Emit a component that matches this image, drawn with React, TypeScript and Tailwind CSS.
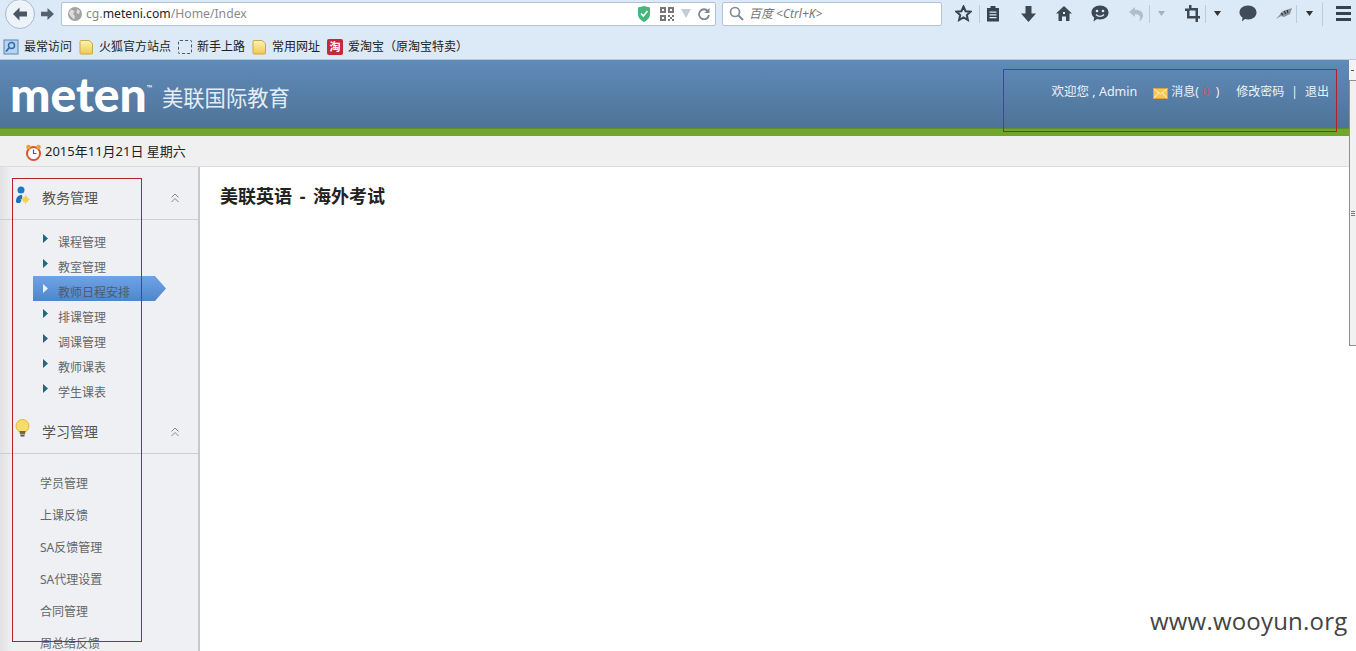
import React from "react";

const cjk = '"Noto Sans","Noto Sans CJK SC",sans-serif';

function Tri({ className = "" }: { className?: string }) {
  return (
    <svg width="7" height="5" viewBox="0 0 7 5" className={className}>
      <path d="M0 0h7L3.5 5z" fill="#333" />
    </svg>
  );
}

function Folder() {
  return (
    <svg width="15" height="16" viewBox="0 0 15 16">
      <defs>
        <linearGradient id="fg" x1="0" y1="0" x2="0" y2="1">
          <stop offset="0" stopColor="#fdf3b8" />
          <stop offset="1" stopColor="#eec94f" />
        </linearGradient>
      </defs>
      <path d="M2 1.5h8l3.5 3v9.5a1 1 0 0 1-1 1H2a1 1 0 0 1-1-1V2.5a1 1 0 0 1 1-1z" fill="url(#fg)" stroke="#c9a94a" />
    </svg>
  );
}

function Bookmark({ icon, label, gap = "gap-[5px]" }: { icon: React.ReactNode; label: string; gap?: string }) {
  return (
    <div className={`flex items-center ${gap} mr-[7px]`}>
      {icon}
      <span className="text-[12px] leading-none text-[#222] whitespace-nowrap">{label}</span>
    </div>
  );
}

function Toolbar() {
  return (
    <div className="h-[27px] flex items-center bg-[#dce9f7] relative shrink-0">
      <div className="w-[30px] h-[30px] rounded-full border border-[#a9b9cb] bg-[#eef3f9] ml-[5px] flex items-center justify-center shrink-0">
        <svg width="16" height="14" viewBox="0 0 16 14">
          <path d="M7.5 0.5 1 7l6.5 6.5V9.5H15v-5H7.5z" fill="#4b5563" />
        </svg>
      </div>
      <svg width="13" height="12" viewBox="0 0 13 12" className="ml-[6px] shrink-0">
        <path d="M6.5 0 13 6l-6.5 6V8.3H0V3.7h6.5z" fill="#566170" />
      </svg>
      <div className="ml-[7px] w-[655px] h-[24px] bg-white border border-[#b4c3d4] rounded-[2px] flex items-center shrink-0">
        <svg width="16" height="16" viewBox="0 0 16 16" className="ml-[5px]">
          <circle cx="8" cy="8" r="7" fill="#a3a3a3" />
          <path d="M4 3.5 7.5 5 6 8l2 2-1 3.500L3.500 10 2 7zM10 3l3 2-1 3-2.500-1z" fill="#dedede" />
        </svg>
        <span className="ml-[3px] mt-[2px] text-[12.2px] leading-none text-[#8a8a8a] whitespace-nowrap">
          cg.<span className="text-[#222]">meteni.com</span>/Home/Index
        </span>
        <div className="ml-auto flex items-center mr-[5px]">
          <svg width="14" height="16" viewBox="0 0 14 16">
            <path d="M1 1.500 7 0l6 1.500V8c0 4-3 6.500-6 8-3-1.500-6-4-6-8z" fill="#47b57e" />
            <path d="m4 7.500 2.300 2.500L10.500 5" fill="none" stroke="#fff" strokeWidth="1.600" />
          </svg>
          <svg width="14" height="14" viewBox="0 0 14 14" className="ml-[9px]">
            <path d="M0 0h6v6H0zM8 0h6v6H8zM0 8h6v6H0zM8 8h2v2H8zM12 8h2v2h-2zM8 12h2v2H8zM12 12h2v2h-2zM10 10h2v2h-2z" fill="#777" />
            <path d="M2 2h2v2H2zM10 2h2v2h-2zM2 10h2v2H2z" fill="#fff" />
          </svg>
          <svg width="10" height="9" viewBox="0 0 10 9" className="ml-[7px]">
            <path d="M0 0h10L5 9z" fill="#c5ccd4" />
          </svg>
          <svg width="12" height="12" viewBox="0 0 12 12" className="ml-[7px]">
            <path d="M10 3.200A5 5 0 1 0 11 7" fill="none" stroke="#7d8790" strokeWidth="1.800" />
            <path d="M11.500 0v5h-5z" fill="#7d8790" />
          </svg>
        </div>
      </div>
      <div className="ml-[6px] w-[220px] h-[24px] bg-white border border-[#b4c3d4] rounded-[2px] flex items-center shrink-0">
        <svg width="15" height="15" viewBox="0 0 15 15" className="ml-[6px]">
          <circle cx="6" cy="6" r="4.500" fill="none" stroke="#7e8a96" strokeWidth="1.700" />
          <path d="m9.500 9.500 4.500 4.500" stroke="#7e8a96" strokeWidth="2" />
        </svg>
        <span className="ml-[5px] text-[12px] leading-none italic text-[#777] whitespace-nowrap">百度 &lt;Ctrl+K&gt;</span>
      </div>
      <div className="flex items-center ml-[13px]">
        <svg width="17" height="17" viewBox="0 0 17 17">
          <path d="m8.500 1.500 2.100 4.700 5 .5-3.800 3.300 1.100 5-4.400-2.600L4.100 15l1.100-5L1.400 6.700l5-.5z" fill="none" stroke="#36424e" strokeWidth="2" />
        </svg>
        <div className="w-px h-[18px] bg-[#bfcbd9] ml-[7px]" />
        <svg width="14" height="17" viewBox="0 0 14 17" className="ml-[6px]">
          <path d="M1 3h3.500V1h5v2H13v13.500H1z" fill="#36424e" />
          <path d="M3.500 6.500h7v1.200h-7zM3.500 9.200h7v1.200h-7zM3.500 12h7v1.200h-7z" fill="#dce9f7" />
        </svg>
        <svg width="15" height="16" viewBox="0 0 15 16" className="ml-[21px]">
          <path d="M4.500 0h6v7.500H15L7.500 16 0 7.500h4.500z" fill="#3d4853" />
        </svg>
        <svg width="16" height="15" viewBox="0 0 16 15" className="ml-[20px]">
          <path d="M8 0 16 7.500h-2.500V15H10v-4.500H6V15H2.500V7.500H0z" fill="#3d4853" />
          <path d="M7 6h2v2H7z" fill="#dce9f7" />
        </svg>
        <svg width="18" height="17" viewBox="0 0 18 17" className="ml-[19px]">
          <path d="M9 0.500c5 0 8.500 3 8.500 7S14 14.500 9 14.500c-1 0-2 0-3-.4L2.500 16.500l.7-4C1.500 11.200.5 9.500.5 7.500.5 3.500 4 .5 9 .5z" fill="#3d4853" />
          <circle cx="6" cy="6" r="1.300" fill="#dce9f7" />
          <circle cx="12" cy="6" r="1.300" fill="#dce9f7" />
          <path d="M5 9.500c2 2.400 6 2.400 8 0" fill="none" stroke="#dce9f7" strokeWidth="1.300" />
        </svg>
        <svg width="14" height="16" viewBox="0 0 14 16" className="ml-[20px]">
          <path d="M6 1 0 6l6 5V8c3 0 5 1.500 5 4 0 1.500-.5 2.500-1 3.500 2.500-1.500 4-3.500 4-6C14 6 11 3.800 6 3.800z" fill="#b4bcc6" />
        </svg>
        <div className="w-px h-[18px] bg-[#bfcbd9] ml-[6px]" />
        <Tri className="ml-[8px] opacity-30" />
        <svg width="15" height="17" viewBox="0 0 15 17" className="ml-[20px]">
          <path d="M4 0h2.500v3H13v8h2v2.500h-2V17h-2.500v-3.500H2V6H0V3.500h4zM4.500 5.500v5.500h6V5.500z" fill="#3d4853" />
        </svg>
        <div className="w-px h-[18px] bg-[#bfcbd9] ml-[5px]" />
        <Tri className="ml-[8px]" />
        <svg width="18" height="17" viewBox="0 0 18 17" className="ml-[18px]">
          <path d="M9 .5c5 0 8.500 3 8.500 7s-3.500 7-8.500 7c-1 0-2 0-3-.4L3 16.500l.5-4C1.500 11.200.5 9.500.5 7.500.5 3.500 4 .5 9 .5z" fill="#414c57" />
        </svg>
        <svg width="18" height="14" viewBox="0 0 18 14" className="ml-[18px]">
          <path d="M1 12 8 4l9-3-2 6-6 3-3-1z" fill="#8a929b" />
          <path d="M6 6l2 2M9 4l2 3M12 3l1 3" stroke="#2f3740" strokeWidth="1.200" />
        </svg>
        <div className="w-px h-[18px] bg-[#bfcbd9] ml-[3px]" />
        <Tri className="ml-[9px]" />
        <div className="w-px h-[24px] bg-[#bfcbd9] ml-[9px]" />
        <div className="ml-[13px] w-[15px] flex flex-col gap-[3px]">
          <div className="h-[3px] bg-[#36424e]" />
          <div className="h-[3px] bg-[#36424e]" />
          <div className="h-[3px] bg-[#36424e]" />
        </div>
      </div>
    </div>
  );
}

function Bookmarks() {
  return (
    <div className="h-[33px] flex items-center pl-[3px] pt-[7px] bg-[#dce9f7] shrink-0 border-b border-[#b5c8dc]">
      <Bookmark
        icon={
          <svg width="16" height="16" viewBox="0 0 16 16">
            <rect x="1" y="1" width="14" height="14" fill="#b9d3ec" stroke="#5a86b5" />
            <circle cx="8.500" cy="6.500" r="3" fill="none" stroke="#2d6cb0" strokeWidth="1.500" />
            <path d="M6 9l-3 3.500" stroke="#2d6cb0" strokeWidth="1.800" />
          </svg>
        }
        label="最常访问"
      />
      <Bookmark icon={<Folder />} label="火狐官方站点" />
      <Bookmark
        icon={<div className="w-[14px] h-[14px] border border-dashed border-[#555] rounded-[2px]" />}
        label="新手上路"
      />
      <Bookmark icon={<Folder />} label="常用网址" />
      <Bookmark
        icon={
          <div className="w-[16px] h-[16px] rounded-[2px] bg-[#c4283a] text-white text-[11px] leading-[16px] text-center font-bold">淘</div>
        }
        label="爱淘宝（原淘宝特卖）"
      />
    </div>
  );
}

function Header() {
  return (
    <div className="h-[68px] flex bg-gradient-to-b from-[#5f8bb9] to-[#4e7398] shrink-0">
      <div className="w-[144px] flex items-start pl-[10px] shrink-0">
        <span
          className="mt-[6px] text-[48px] leading-[56px] font-black text-white tracking-[0px]"
          style={{ fontFamily: '"Lato","Noto Sans",sans-serif' }}
        >
          meten
        </span>
        <span className="text-[7px] leading-none text-white mt-[24px]">™</span>
      </div>
      <span className="ml-[18px] mt-[27px] text-[21.3px] leading-[22px] text-[#e4edf5] whitespace-nowrap">美联国际教育</span>
      <div className="ml-auto pr-[20px] pt-[23px] flex items-center h-[18px] box-content text-[12px] leading-none text-[#eef3f8] whitespace-nowrap">
        <span className="text-[12.5px]">欢迎您 , Admin</span>
        <svg width="15" height="11" viewBox="0 0 15 11" className="ml-[16px] mt-[3px]">
          <rect x="0.500" y="0.500" width="14" height="10" fill="#f6c957" stroke="#d9a53c" />
          <path d="m1 1 6.500 5L14 1M1 10l4.500-5M14 10 9.500 5" fill="none" stroke="#fff3c9" />
        </svg>
        <span className="ml-[3px]">消息(</span>
        <span className="ml-[4px] text-[#c25b56]">0</span>
        <span className="ml-[6px]">)</span>
        <span className="ml-[17px]">修改密码</span>
        <span className="ml-[7px]">|</span>
        <span className="ml-[7px]">退出</span>
      </div>
    </div>
  );
}

function GroupHead({ icon, label }: { icon: React.ReactNode; label: string }) {
  return (
    <div className="h-[53px] relative flex items-start border-b border-[#cfcfd3] shrink-0">
      <div className="w-[42px] pl-[14px] pt-[19px] shrink-0">{icon}</div>
      <span className="mt-[22px] text-[14px] leading-[18px] text-[#555]">{label}</span>
      <svg width="10" height="10" viewBox="0 0 10 10" className="ml-auto mr-[18px] mt-[26px]">
        <path d="M1.500 4.500 5 1l3.500 3.500M1.500 9 5 5.500 8.500 9" fill="none" stroke="#888" strokeWidth="1" />
      </svg>
    </div>
  );
}

function ArrowItem({ label, active }: { label: string; active?: boolean }) {
  return (
    <div className="h-[25px] relative flex items-start">
      {active && (
        <svg width="133" height="25" viewBox="0 0 133 25" className="absolute left-[33px] top-0" preserveAspectRatio="none">
          <defs>
            <linearGradient id="ab" x1="0" y1="0" x2="0" y2="1">
              <stop offset="0" stopColor="#6fa3e6" />
              <stop offset="1" stopColor="#4f86cb" />
            </linearGradient>
          </defs>
          <path d="M0 0h122l11 12.500L122 25H0z" fill="url(#ab)" />
        </svg>
      )}
      <svg width="5" height="9" viewBox="0 0 5 9" className="relative ml-[43px] mt-[8px] shrink-0">
        <path d="M0 0l5 4.500L0 9z" fill={active ? "#e6f0fb" : "#1d6a7d"} />
      </svg>
      <span className={`relative ml-[10px] mt-[9px] text-[12px] leading-[16px] ${active ? "text-[#4d5b6e]" : "text-[#666]"}`}>{label}</span>
    </div>
  );
}

function Sidebar() {
  const first = ["课程管理", "教室管理", "教师日程安排", "排课管理", "调课管理", "教师课表", "学生课表"];
  const second = ["学员管理", "上课反馈", "SA反馈管理", "SA代理设置", "合同管理", "周总结反馈"];
  return (
    <aside className="w-[200px] shrink-0 bg-[#eff0f4] bg-gradient-to-r from-[#e2e2e4] via-[#eff0f4] via-[6%] to-[#eff0f4] border-r-2 border-[#c9c9cb] overflow-hidden flex flex-col">
      <GroupHead
        label="教务管理"
        icon={
          <svg width="16" height="19" viewBox="0 0 16 19">
            <circle cx="7" cy="4" r="3.500" fill="#1f79c4" />
            <path d="M2 16c0-5 2-7 6-7 1 3-1 6-2 8H3z" fill="#1f6fb5" />
            <circle cx="11.500" cy="13.500" r="3" fill="#f5d247" />
            <path d="M11.500 8.500v10M6.500 13.500h10" stroke="#f5d247" strokeWidth="0.800" />
          </svg>
        }
      />
      <div className="pt-[6px] shrink-0">
        {first.map((l) => (
          <ArrowItem key={l} label={l} active={l === "教师日程安排"} />
        ))}
      </div>
      <GroupHead
        label="学习管理"
        icon={
          <svg width="15" height="19" viewBox="0 0 15 19" className="-mt-[1px] ml-[1px]">
            <circle cx="7.500" cy="7" r="6.500" fill="#f7dc6a" stroke="#e3b53a" />
            <path d="M4.500 12h6l-.5 3.500H5z" fill="#7a6a3a" />
            <path d="M5.500 16h4v1.500h-4z" fill="#555" />
          </svg>
        }
      />
      <div className="pt-[14px] pl-[40px] shrink-0">
        {second.map((l) => (
          <div key={l} className="h-[32px] flex items-center text-[12px] leading-none text-[#666] whitespace-nowrap">{l}</div>
        ))}
      </div>
    </aside>
  );
}

function Scrollbar() {
  return (
    <div className="w-[7px] shrink-0 bg-[#f3f3f3] flex flex-col">
      <div className="h-[20px] flex justify-center items-center">
        <div className="w-[3px] h-px bg-[#555]" />
      </div>
      <div className="h-[266px] w-full bg-[#f1f1f1] border-l border-t border-b border-[#8f8f8f] flex flex-col items-center justify-center gap-px">
        <div className="w-[4px] h-px bg-[#777]" />
        <div className="w-[4px] h-px bg-[#777]" />
        <div className="w-[4px] h-px bg-[#777]" />
      </div>
      <div className="flex-1 bg-white" />
    </div>
  );
}

export default function App() {
  return (
    <div className="relative w-[1356px] h-[651px] overflow-hidden bg-white flex flex-col" style={{ fontFamily: cjk }}>
      <Toolbar />
      <Bookmarks />
      <div className="flex-1 flex min-h-0">
        <div className="w-[1349px] shrink-0 flex flex-col min-h-0">
          <Header />
          <div className="h-[8px] bg-[#72a52e] border-t border-[#5f8f2a] shrink-0" />
          <div className="h-[31px] bg-[#f0f0f0] border-b border-[#dcdcdc] flex items-center pl-[25px] shrink-0">
            <svg width="17" height="17" viewBox="0 0 17 17" className="mt-[2px]">
              <circle cx="8.500" cy="9.500" r="6.500" fill="#fff" stroke="#d9532c" strokeWidth="2" />
              <circle cx="3.500" cy="3" r="2.300" fill="#e8a13a" />
              <circle cx="13.500" cy="3" r="2.300" fill="#e8a13a" />
              <path d="M8.500 5.500v4h3" fill="none" stroke="#2c6a8a" strokeWidth="1.200" />
            </svg>
            <span className="ml-[3px] text-[13px] leading-none text-[#222] whitespace-nowrap">2015年11月21日 星期六</span>
          </div>
          <div className="flex-1 flex min-h-0">
            <Sidebar />
            <main className="flex-1 bg-white pl-[20px] pt-[16px]">
              <h1 className="text-[18px] leading-[26px] font-bold text-[#222] [word-spacing:3px]">美联英语 - 海外考试</h1>
            </main>
          </div>
        </div>
        <Scrollbar />
      </div>
      <div className="absolute left-[12px] top-[178px] w-[130px] h-[464px] border border-[#b3202e] pointer-events-none" />
      <div className="absolute left-[1003px] top-[69px] w-[334px] h-[63px] border border-[#b3202e] pointer-events-none" />
      <div className="absolute left-[1150px] top-[604px] text-[24px] leading-[34px] tracking-[0.2px] text-[#444] whitespace-nowrap" style={{ fontFamily: '"Open Sans",sans-serif' }}>www.wooyun.org</div>
    </div>
  );
}
